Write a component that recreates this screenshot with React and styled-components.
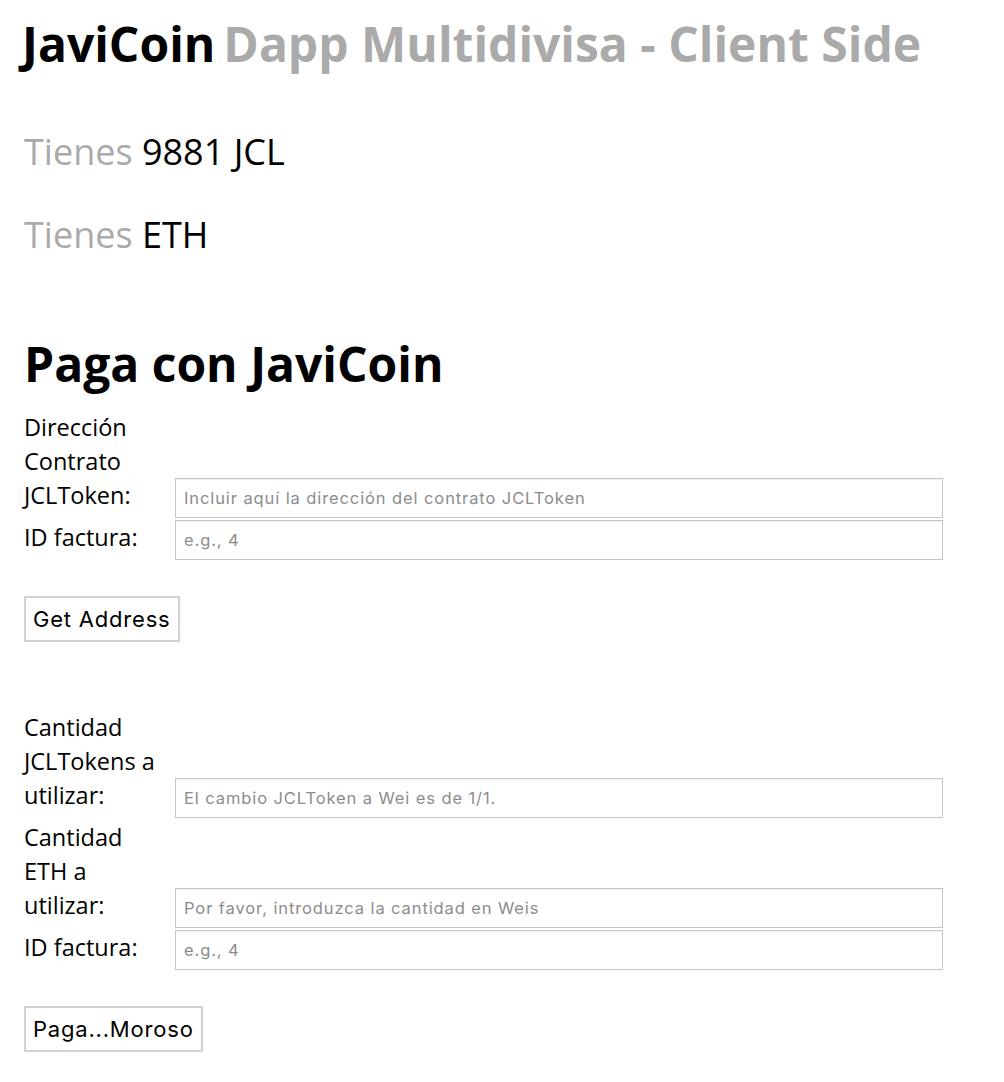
import React from 'react'
import styled, { createGlobalStyle } from 'styled-components'

const GlobalStyle = createGlobalStyle`
body{
    margin: 0;
    background: #ffffff;
    font-family: "Open Sans", "Liberation Sans", sans-serif;
    color: #000000;
}
`

const App = () =>{
    return(
        <Page>
            <GlobalStyle/>
            <Title>JaviCoin<Subtitle>Dapp Multidivisa - Client Side</Subtitle></Title>
            <Balance>
                <Muted>Tienes</Muted> 9881 JCL
            </Balance>
            <Balance second>
                <Muted>Tienes</Muted> ETH
            </Balance>

            <Heading>Paga con JaviCoin</Heading>
            <Form>
                <Row>
                    <Label>Dirección Contrato JCLToken:</Label>
                    <Input type="text" placeholder="Incluir aquí la dirección del contrato JCLToken"/>
                </Row>
                <Row>
                    <Label>ID factura:</Label>
                    <Input type="text" placeholder="e.g., 4"/>
                </Row>
                <Button type="button">Get Address</Button>
            </Form>

            <Form second>
                <Row>
                    <Label>Cantidad JCLTokens a utilizar:</Label>
                    <Input type="text" placeholder="El cambio JCLToken a Wei es de 1/1."/>
                </Row>
                <Row>
                    <Label>Cantidad ETH a utilizar:</Label>
                    <Input type="text" placeholder="Por favor, introduzca la cantidad en Weis"/>
                </Row>
                <Row>
                    <Label>ID factura:</Label>
                    <Input type="text" placeholder="e.g., 4"/>
                </Row>
                <Button type="button">Paga...Moroso</Button>
            </Form>
        </Page>
    )
}

const Page = styled.div`
padding: 0 24px 30px 24px;
width: 920px;
`
const Title = styled.h1`
font-size: 48px;
font-weight: 700;
line-height: 57.6px;
margin: 15px 0 0 -2px;
white-space: nowrap;
`
const Subtitle = styled.span`
color: #aaaaaa;
margin-left: 8px;
`
const Muted = styled.span`
color: #aaaaaa;
`
const Balance = styled.p`
font-size: 36px;
font-weight: 400;
line-height: 48px;
margin: ${props => props.second ? '35px' : '55px'} 0 0 0;
`
const Heading = styled.h2`
font-size: 48px;
font-weight: 700;
line-height: 57.6px;
margin: 76px 0 0 0;
`
const Form = styled.form`
display: flex;
flex-direction: column;
align-items: flex-start;
margin-top: ${props => props.second ? '68px' : '18px'};
`
const Row = styled.div`
display: flex;
align-items: last baseline;
width: 100%;
margin-bottom: 2px;
`
const Label = styled.label`
width: 140px;
flex: none;
margin-right: 11px;
font-size: 23.5px;
line-height: 34px;
`
const Input = styled.input`
box-sizing: border-box;
width: 768px;
height: 40px;
padding: 0 8px;
border: 1px solid #c6c6c6;
border-radius: 0;
font-family: "Inter", "Liberation Sans", sans-serif;
font-size: 16.5px;
letter-spacing: 0.9px;
color: #000000;
background: #ffffff;
box-shadow: inset 0 1px 1px rgba(0,0,0,0.06);
&::placeholder{
    color: #8c8c8c;
}
&:focus{
    outline: none;
}
`
const Button = styled.button`
margin-top: 34px;
height: 46px;
padding: 0 7px;
background: #ffffff;
border: 2px solid #d2d2d2;
border-radius: 0;
font-family: "Inter", "Liberation Sans", sans-serif;
font-size: 22px;
letter-spacing: 0.8px;
color: #000000;
cursor: pointer;
`

export default App
